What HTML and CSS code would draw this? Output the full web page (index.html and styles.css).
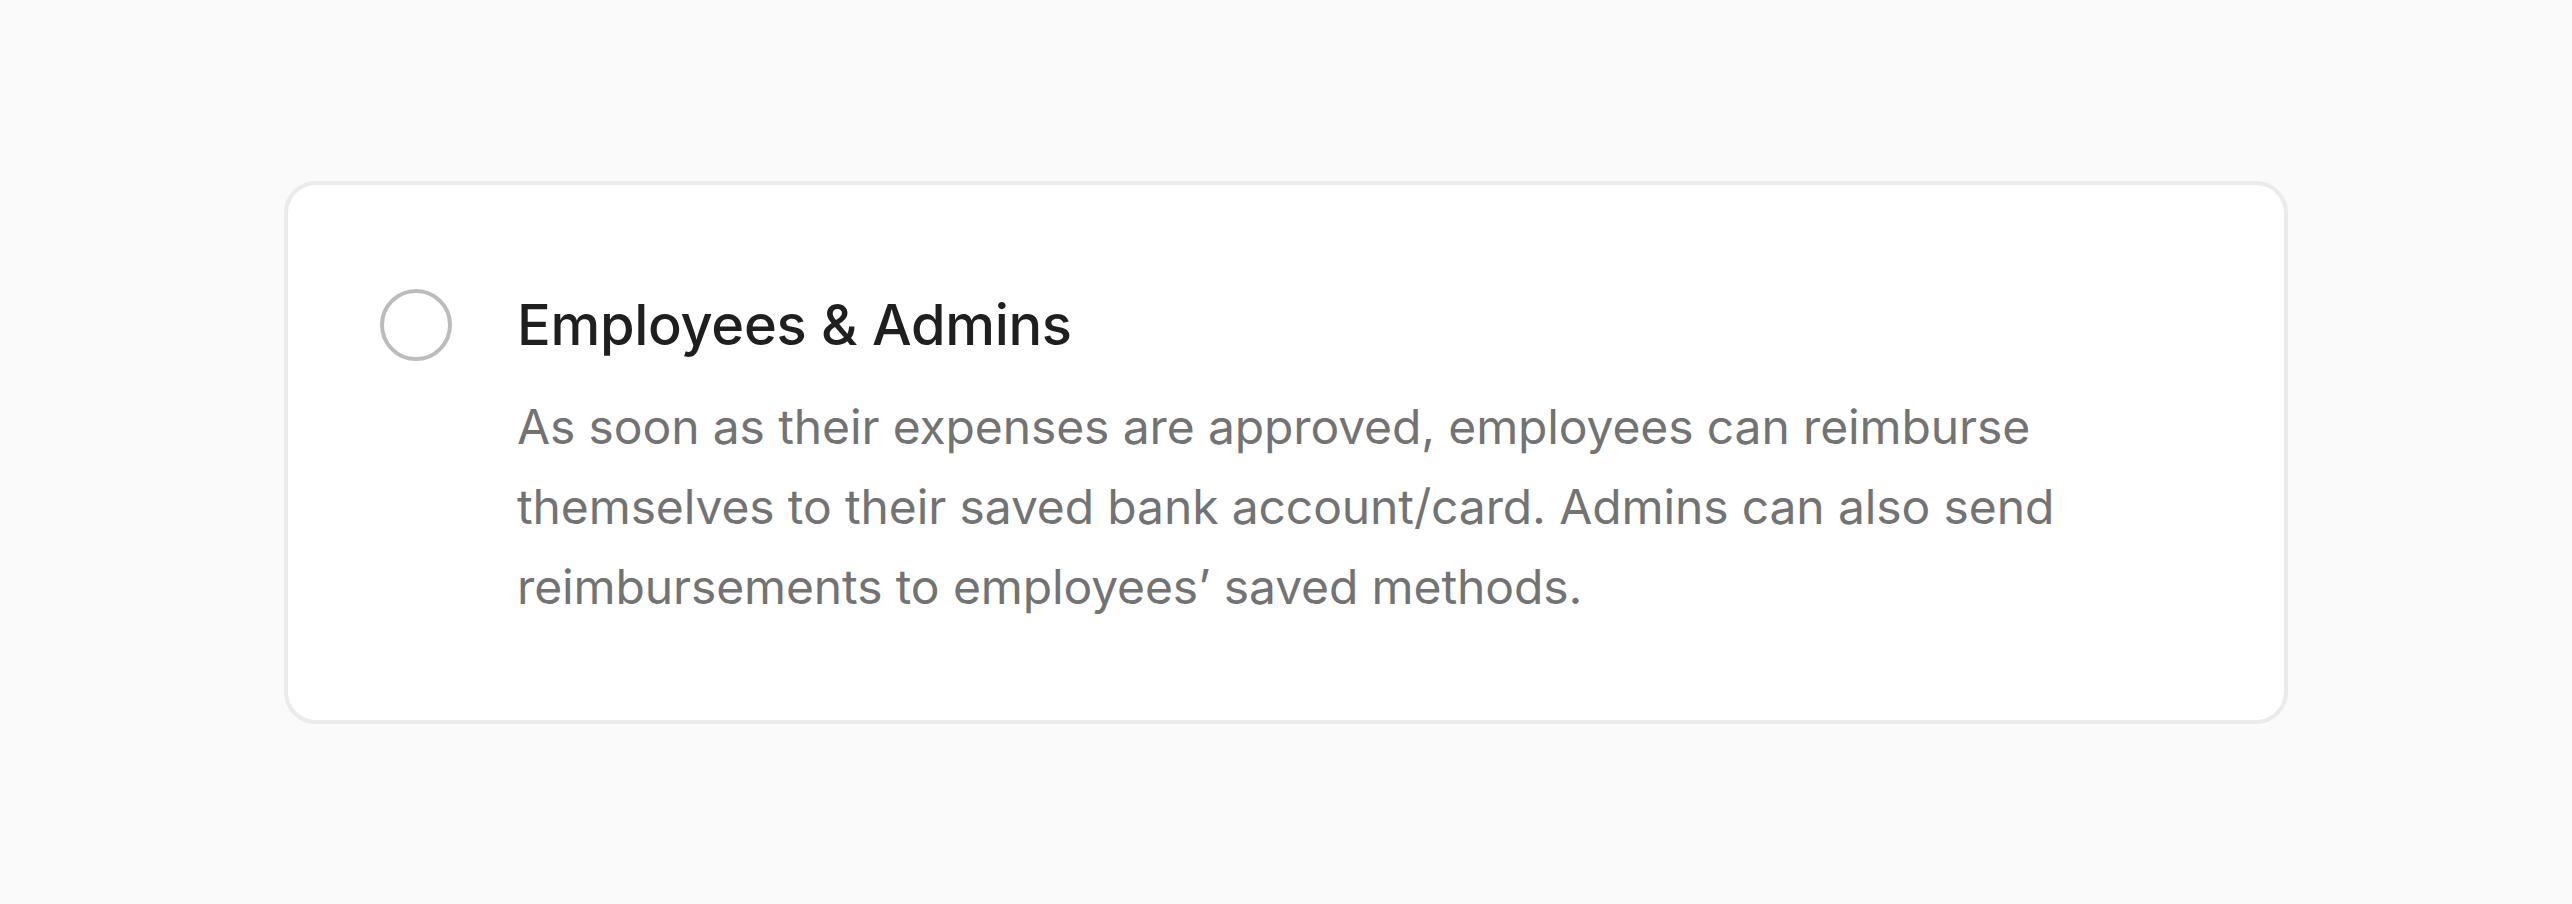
FILE: index.html
```html
<!DOCTYPE html>
<html lang="en">
<head>
    <meta charset="UTF-8">
    <meta name="viewport" content="width=device-width, initial-scale=1.0">
    <title>Reimbursement option</title>
    <link rel="stylesheet" href="styles.css">
</head>
<body>
    <main class="page">
        <label class="option-card">
            <span class="radio"></span>
            <div class="option-text">
                <h2 class="option-title">Employees &amp; Admins</h2>
                <p class="option-desc">As soon as their expenses are approved, employees can reimburse themselves to their saved bank account/card. Admins can also send reimbursements to employees’ saved methods.</p>
            </div>
        </label>
    </main>
</body>
</html>
```

FILE: styles.css
```css
html, body {
    margin: 0;
    padding: 0;
}

body {
    font-family: 'Inter', 'Noto Sans', sans-serif;
    background: #fafafa;
}

.page {
    height: 904px;
    display: flex;
    align-items: center;
    justify-content: center;
}

.option-card {
    box-sizing: border-box;
    width: 2004px;
    display: flex;
    gap: 65px;
    padding: 104px 92px 93px 92px;
    background: #fff;
    border: 4px solid #ebebeb;
    border-radius: 32px;
    cursor: pointer;
}

.radio {
    flex: none;
    box-sizing: border-box;
    width: 72px;
    height: 72px;
    border: 4px solid #bcbcbc;
    border-radius: 50%;
}

.option-text {
    flex: 1;
}

.option-title {
    margin: 0;
    font-size: 56px;
    line-height: 72px;
    font-weight: 500;
    letter-spacing: -0.3px;
    color: #1f1f1f;
}

.option-desc {
    margin: 26px 0 0 0;
    font-size: 48px;
    line-height: 80px;
    letter-spacing: -0.12px;
    color: #737373;
}
```
